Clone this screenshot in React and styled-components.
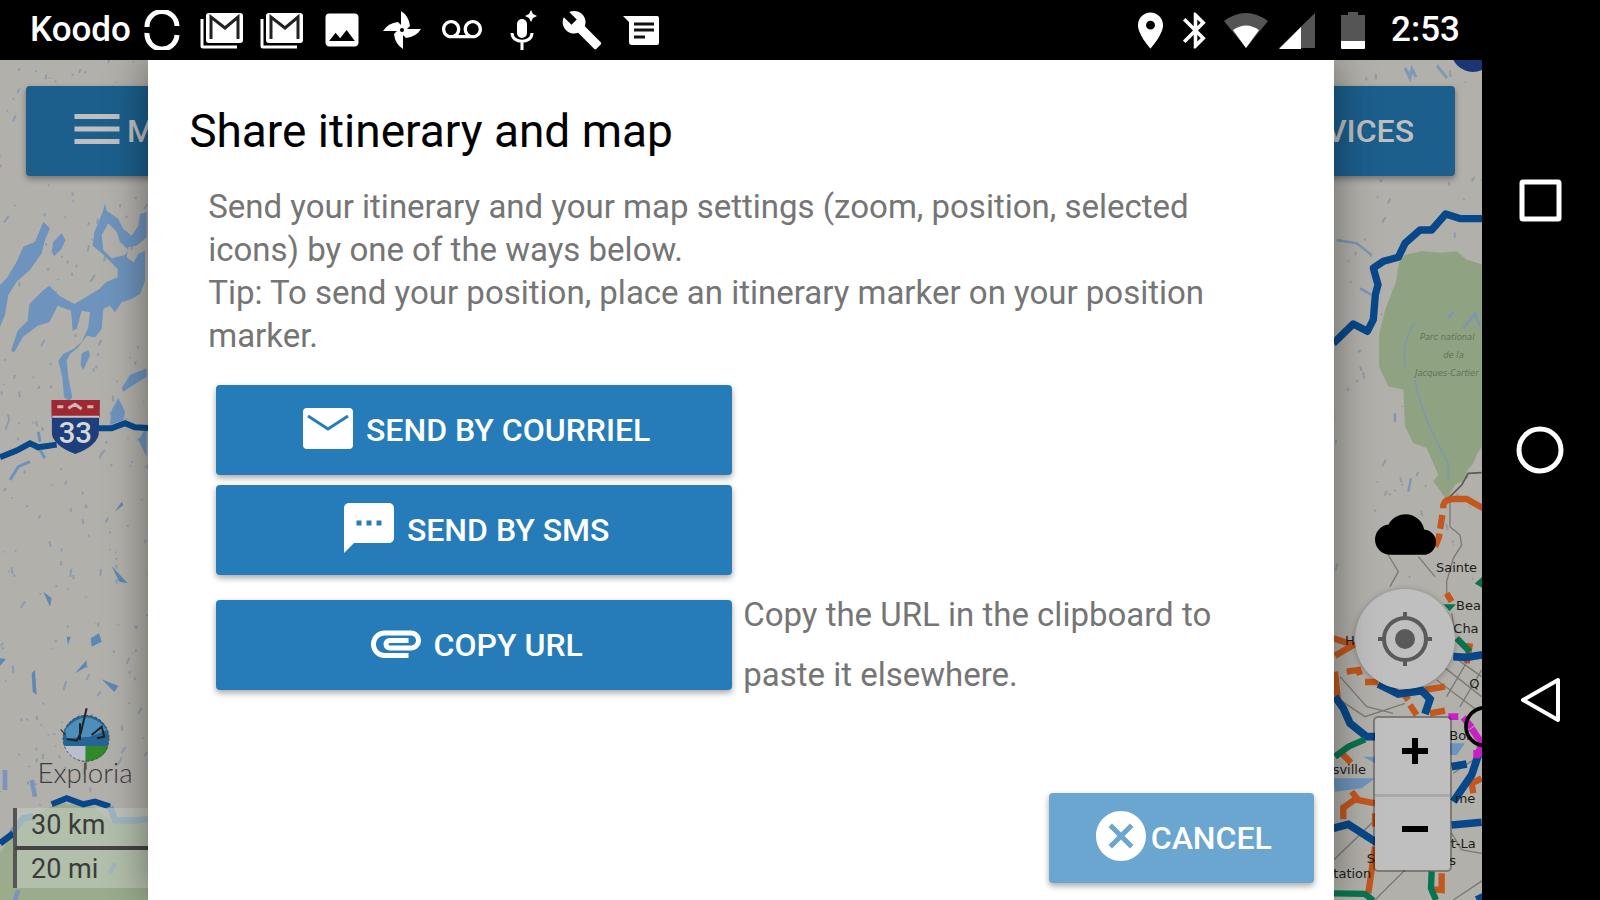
import styled, { createGlobalStyle } from 'styled-components';
import {
    MdAttachment,
    MdBluetooth,
    MdBuild,
    MdCancel,
    MdCloud,
    MdImage,
    MdLocationOn,
    MdMenu,
    MdTextsms,
    MdVoicemail,
} from 'react-icons/md';

const colors = {
    primary: '#267cb9',
    primaryDimmed: '#1c5f8d',
    primaryLight: '#6aa6cf',
    land: '#b2b0aa',
    water: '#6e94bd',
    forest: '#8fa382',
    motorway: '#08488a',
    road: '#c4571d',
    trunk: '#08744f',
    control: '#bfbfbf',
    bodyText: '#757575',
};

const GlobalStyle = createGlobalStyle`
    * {
        box-sizing: border-box;
    }

    body {
        margin: 0;
        background: #000;
        font-family: Roboto, 'Liberation Sans', sans-serif;
    }

    button {
        font-family: inherit;
        border: 0;
        cursor: pointer;
    }
`

const Device = styled.div`
    display: grid;
    grid-template-columns: 1fr 118px;
    height: 100vh;
    overflow: hidden;
    background: #000;
`

const Screen = styled.div`
    display: flex;
    flex-direction: column;
    min-width: 0;
    min-height: 0;
`

const StatusBar = styled.header`
    display: flex;
    align-items: center;
    justify-content: space-between;
    flex: none;
    height: 60px;
    padding: 0 22px 0 30px;
    color: #fff;
    font-size: 35px;
    font-weight: 500;
    line-height: 40px;
`

const StatusGroup = styled.div`
    display: flex;
    align-items: center;
    gap: ${({ gap }) => gap};

    svg {
        display: block;
        flex: none;
    }
`

const StatusCell = styled.span`
    display: flex;
    justify-content: center;
    width: ${({ width }) => width};
`

const Clock = styled.time`
    margin-left: 5px;
`

const MapArea = styled.main`
    position: relative;
    display: flex;
    flex-direction: column;
    justify-content: space-between;
    flex: 1;
    min-height: 0;
    padding: 26px 27px 30px 26px;
    overflow: hidden;
    background: ${colors.land};
`

const MapCanvas = styled.svg`
    position: absolute;
    inset: 0;
    width: 100%;
    height: 100%;
`

const Toolbar = styled.nav`
    position: relative;
    display: flex;
    justify-content: space-between;
`

const RaisedButton = styled.button`
    display: flex;
    align-items: center;
    justify-content: center;
    gap: ${({ gap }) => gap || '0'};
    height: 90px;
    padding: 0 41px;
    border-radius: 4px;
    color: ${({ dimmed }) => (dimmed ? '#bfbfbf' : '#fff')};
    background: ${({ background }) => background || colors.primary};
    box-shadow: 0 3px 6px rgba(0, 0, 0, .35);
    font-size: 32px;
    font-weight: 500;
    line-height: 40px;
    text-transform: uppercase;

    svg {
        flex: none;
        margin-bottom: 4px;
    }
`

const MapControls = styled.div`
    position: relative;
    display: flex;
    flex-direction: column;
    align-items: center;
    align-self: flex-end;
    width: 100px;
`

const LocateButton = styled.button`
    display: flex;
    align-items: center;
    justify-content: center;
    width: 100px;
    height: 100px;
    margin: 24px 0 29px;
    padding: 0;
    border-radius: 50%;
    background: ${colors.control};
    box-shadow: 0 1px 6px rgba(0, 0, 0, .3);
`

const ZoomControl = styled.div`
    display: flex;
    flex-direction: column;
    align-self: flex-end;
    margin-right: 5px;
    border-radius: 3px;
    background: ${colors.control};
    box-shadow: 0 0 0 2px rgba(0, 0, 0, .3);
`

const ZoomButton = styled.button`
    display: flex;
    align-items: center;
    justify-content: center;
    width: 75px;
    height: 76px;
    padding: 0 0 10px 4px;
    background: transparent;

    & + & {
        border-top: 3px solid #a8a8a8;
    }
`

const Dialog = styled.section`
    position: absolute;
    top: 0;
    bottom: 0;
    left: 10%;
    display: flex;
    flex-direction: column;
    width: 80%;
    padding: 48px 20px 17px 41px;
    background: #fff;
    box-shadow: 0 0 40px rgba(0, 0, 0, .45);
`

const DialogTitle = styled.h2`
    margin: 0;
    color: #000;
    font-size: 46px;
    font-weight: 400;
    line-height: 46px;
`

const DialogText = styled.p`
    margin: 31px 60px 0 19px;
    color: ${colors.bodyText};
    font-size: 33px;
    line-height: 43px;
`

const ShareList = styled.div`
    display: grid;
    grid-template-columns: 516px 1fr;
    column-gap: 11px;
    row-gap: 10px;
    margin: 28px 60px 0 27px;
`

const ShareButton = styled(RaisedButton)`
    grid-column: 1;
    margin-top: ${({ spaced }) => (spaced ? '15px' : '0')};
`

const ShareHint = styled.p`
    align-self: start;
    margin: 0;
    color: ${colors.bodyText};
    font-size: 33px;
    line-height: 60px;
`

const DialogActions = styled.footer`
    display: flex;
    justify-content: flex-end;
    margin-top: auto;
`

const CancelButton = styled(RaisedButton)`
    min-width: 265px;
    background: ${colors.primaryLight};
`

const SystemBar = styled.aside`
    display: flex;
    flex-direction: column;
    align-items: center;
    justify-content: center;
    gap: 200px;
    background: #000;
`

const SystemButton = styled.button`
    width: 50px;
    height: 50px;
    padding: 0;
    background: transparent;

    svg {
        display: block;
    }
`

const SyncIcon = () => (
    <svg width="40" height="40" viewBox="0 0 40 40" fill="none" stroke="#fff" strokeWidth="5">
        <path d="M5 17A15 15 0 0 1 35 16" />
        <path d="M5 23A15 15 0 0 0 35 25" />
    </svg>
)

const GmailIcon = () => (
    <svg width="44" height="40" viewBox="0 0 44 40" fill="none">
        <path d="M2 9v27q0 1 1 1h34" stroke="#fff" strokeWidth="3" />
        <rect x="6" y="3" width="37" height="30" rx="3" fill="#fff" />
        <path d="M11 29V7l14 11L38 7v22" stroke="#222" strokeWidth="3" />
    </svg>
)

const PinwheelIcon = () => (
    <svg width="40" height="40" viewBox="0 0 40 40" fill="#fff">
        {[0, 90, 180, 270].map( a => (
            <path key={a} transform={`rotate(${a} 20 20)`} d="M19 18V1q8 5 9 15l-5 5z" />
        ))}
        <circle cx="20" cy="20" r="2" fill="#000" />
    </svg>
)

const AssistantMicIcon = () => (
    <svg width="40" height="40" viewBox="0 0 40 40" fill="none">
        <rect x="15" y="9" width="10" height="19" rx="5" fill="#fff" />
        <path d="M10 23c0 11 20 11 20 0M20 31v9" stroke="#fff" strokeWidth="3" />
        <path d="M29 0l2 4 4 2-4 2-2 4-2-4-4-2 4-2z" fill="#fff" />
    </svg>
)

const MessageIcon = () => (
    <svg width="40" height="40" viewBox="0 0 40 40" fill="none">
        <path d="M1 6h34q2 0 2 2v25q0 2-2 2H10q-3 0-3-3V12z" fill="#fff" />
        <path d="M12 14h20M12 20h20M12 27h11" stroke="#111" strokeWidth="3" />
    </svg>
)

const WifiIcon = () => (
    <svg width="44" height="40" viewBox="0 0 44 40">
        <path d="M0 11Q22-5 44 11L22 38z" fill="#555" />
        <path d="M9 20q13-9 26 0L22 38z" fill="#fff" />
    </svg>
)

const SignalIcon = () => (
    <svg width="36" height="40" viewBox="0 0 36 40">
        <path d="M36 3v35H0z" fill="#555" />
        <path d="M22 17v22H0z" fill="#fff" />
    </svg>
)

const BatteryIcon = () => (
    <svg width="26" height="40" viewBox="0 0 26 40">
        <path d="M8 2h10v3h7v26H1V5h7z" fill="#555" />
        <path d="M1 31h24v7q0 1-1 1H2q-1 0-1-1z" fill="#fff" />
    </svg>
)

const MailIcon = () => (
    <svg width="60" height="60" viewBox="0 0 60 60">
        <rect x="5" y="10" width="50" height="41" rx="4" fill="#fff" />
        <path d="M10 18l20 13 20-13" fill="none" stroke={colors.primary} strokeWidth="3" />
    </svg>
)

const TargetIcon = () => (
    <svg width="56" height="56" viewBox="0 0 56 56" fill="none" stroke="#5a5a5a">
        <circle cx="28" cy="28" r="21" strokeWidth="4" />
        <circle cx="28" cy="28" r="10" fill="#5a5a5a" stroke="none" />
        <path d="M28 1v8M28 47v8M1 28h8M47 28h8" strokeWidth="4" />
    </svg>
)

// Small lakes spread over the land, always in the same places
const buildLakes = (count, x0, y0, width, height, seed) => {
    let state = seed
    const next = () => {
        state = (state * 16807) % 2147483647
        return state / 2147483647
    }
    return Array.from({ length: count }, () => {
        const x = x0 + next() * width
        const y = y0 + next() * height
        const size = next() * next() * 9 + 1
        return `M${x.toFixed(1)} ${y.toFixed(1)}l${(size * (next() - .3)).toFixed(1)} ${(-size).toFixed(1)}`
    }).join('')
}

const leftLakes = buildLakes(230, 0, 60, 148, 750, 77)
const rightLakes = buildLakes(90, 1332, 60, 150, 520, 431)

const WestMap = () => (
    <g>
        <path d={leftLakes} stroke="#7590b0" strokeWidth="2" opacity=".6" />
        <g transform="translate(0 180) scale(.3333)">
            <path
                fill={colors.water}
                d="M130 125l20 20-15 35-10 40-35 50-40 35-25 40-10 60-15 35v-125l20-20 30-50 20-45 35-15zM155 215l5-30 25-25 12 20-15 30-20 18zM315 70l5 22 35 25 15 30 25 20 20-30 5-35 20-5v75l-30 25-25 5-5 30 20 15 15-25 20-10v90l-15 40-25 15-30 10-20 30-15-20-20 10-5 60-20 25-25-5-25 35-25 20-10 20 5 50 12 60-10 12-15-12-5-60-12-50 15-20 30-15 25-20 20-45 5-45-25-5-15 55-12 5-5-60-40-15-25 50-35 10-45 35-25 45-10-5 20-60 30-30 5-50 40-40 20-15 30 30 45 25 50-30 25-15 20-20 35-15v-25l-45-45-30-25 5-40 25-60zM325 130l-20 35 5 45 25 25 40-10 10-15-25-25-10-30z"
                fillRule="evenodd"
            />
            <path fill={colors.water} d="M335 690l20-35 20 40-5 25-40 15zM365 625l25-40 50-20v25l-40 25-30 20zM415 780l25-40v90zM245 520l20-10 5 15-20 45-8-15z" />
            <path d="M0 832l50-20 40-22 25 12 55-8M290 745h45l40-15 30 12 40 2" fill="none" stroke={colors.motorway} strokeWidth="18" />
            <path d="M30 900l25-40 35-15M115 755l5 30M120 810l15 25" fill="none" stroke={colors.water} strokeWidth="9" />
            <path d="M155 660h144l-3 105q-10 35-70 57-60-22-70-57z" fill="#1f3f7c" />
            <path d="M155 660h144v50H155z" fill="#a02830" />
            <path d="M172 680h18M205 685l20-12 20 14M262 680h18" stroke="#d0b8b8" strokeWidth="9" fill="none" />
            <path d="M157 710h140" stroke="#c9c2c6" strokeWidth="6" />
            <text x="226" y="790" textAnchor="middle" fontFamily="Roboto" fontWeight="500" fontSize="88" fill="#d8d8d8">33</text>
        </g>
        <g transform="translate(0 460) scale(.3333)">
            <path fill="#9aac8c" d="M0 1180l60-90 110-60 110 10 60 50h105v260H0z" />
            <path d="M155 1033l45-18 50 18 35-8 45 15" fill="none" stroke={colors.motorway} strokeWidth="18" />
            <path d="M330 1040l15 40 60 2 40-5M35 1120l35-45 30-5" fill="none" stroke={colors.water} strokeWidth="20" />
            <path d="M0 1150l40-30" stroke={colors.motorway} strokeWidth="20" />
            <path d="M15 930v60M95 960l10 50M55 1290l-20 60M345 1210l-15 30" stroke="#7c93bd" strokeWidth="14" />
            <path fill="#5b88b4" d="M335 318l48 52-25-5zM272 535l25-15 8 25-30 15zM305 658l50 20-12 18zM95 640l10-10 5 75-12-10zM225 640l35-40v20zM130 395l25 20-5 25zM0 595l18 2-18 20zM200 530l12 0-8 25zM345 155l20-30 5 10z" />
        </g>
        <g transform="translate(30 700) scale(.3333)">
            <circle cx="168" cy="115" r="69" fill="#256595" />
            <path d="M105 90q65-75 126 0l-50 20-70 5z" fill="#5fa0cc" opacity=".7" />
            <path d="M100 138h67v46q-55-5-67-46z" fill="#b9bfcb" />
            <path d="M167 138h68q-12 42-68 46z" fill="#2f8a27" />
            <path d="M170 25l-18 75-12 22-30-5M150 70v50M185 105l30-25 8 30-22 5" fill="none" stroke="#222" strokeWidth="6" />
            <path d="M92 88l14 16" stroke="#333" strokeWidth="4" />
            <circle cx="168" cy="115" r="69" fill="none" stroke="#3f4a50" strokeWidth="3" strokeDasharray="8 6" />
            <path d="M168 184v25" stroke="#555" strokeWidth="4" />
            <text x="165" y="250" textAnchor="middle" fontFamily="Lato" fontWeight="300" fontSize="83" fill="#3c3c3c">Exploria</text>
        </g>
        <rect x="15" y="808" width="140" height="80" fill="#c7cfc2" opacity=".55" />
        <path d="M15 808v80" stroke="#555" strokeWidth="4" />
        <path d="M15 848h140" stroke="#444" strokeWidth="4" />
        <g fontFamily="Roboto" fontSize="27" fill="#3b3b3b">
            <text x="31" y="834">30 km</text>
            <text x="31" y="878">20 mi</text>
        </g>
    </g>
)

const EastMap = () => (
    <g>
        <path d={rightLakes} stroke="#7d8ca0" strokeWidth="2" opacity=".6" />
        <circle cx="1473" cy="50" r="22" fill="#1c3574" />
        <path d="M1405 68l5 10 2-9 4 8M1437 66l10 12" fill="none" stroke="#7c9ab8" strokeWidth="3" />
        <g transform="translate(1320 180) scale(.3333)">
            <path fill={colors.forest} d="M255 225l50-12 60 5 45-4 30 25 50 15v540l-20 30-10 25-20 25 5 20-40 20-25 45-40-55 15-20-35-80-40-15-25-50-5-110-45-10-28-60v-95l20-80 30-75 10-60z" />
            <path d="M40 490l60-58 42 22 18-35 6-75 8-30-14-50 30-20 45-12 20-42 45-40h35l42-48 45 14h65" fill="none" stroke={colors.motorway} strokeWidth="22" strokeLinejoin="round" />
            <path d="M255 560q-10-80 30-130M285 600q20 110 100 250v50" fill="none" stroke="#8198a8" strokeWidth="5" />
            <path d="M120 325l35 20M50 180l60 10 45 35M265 935l8-40M225 700v25M385 415l15-20M430 445l35-45 15 40" fill="none" stroke="#7b95b5" strokeWidth="7" />
            <path d="M390 950l35-35 20-35 40-2" fill="none" stroke="#5b5b58" strokeWidth="5" />
            <g fontFamily="DejaVu Sans" fontStyle="italic" fontSize="25" fill="#5f7355">
                <text x="300" y="480">Parc national</text>
                <text x="370" y="535">de la</text>
                <text x="285" y="588">Jacques-Cartier</text>
            </g>
        </g>
        <g transform="translate(1320 480) scale(.3333)">
            <path d="M390 60v80l30 25 5 30-25 40-20 70v45M205 225l30 50-25 45M295 230l50 60M45 650l90 60 120-40M60 590l80 90 80 20M0 1180l165-160M165 1260l90-90M400 1260l90-60M370 560l115 90M350 600l120 90M400 530l85 60M380 650l70-120M420 680l65-110M395 400l10 60M400 880l90-60M395 1060l30 50 60 10" fill="none" stroke="#7b7973" strokeWidth="4" />
            <path fill={colors.water} d="M40 895h125l-40 30-80 10zM390 790h45l-25 35h-20zM130 830h35v20z" />
            <g fill="none" strokeWidth="19" stroke={colors.road}>
                <path d="M370 85v-10q5-18 30-18h40l50 28" />
                <path d="M367 105l-10 65-15 40" strokeDasharray="42 14" />
                <path d="M380 340l15 25M40 475l60 20-55 32M45 575l8 80M80 575l35-5 5 15M135 606h40M315 630l60-10M270 675l20 30M330 700l45-8M65 820l28 28M165 970l-60-12-35 25v35M95 935l20 25M145 1240l20-140M165 1000v40M485 895l-30 15 5 30M365 1180v50l-25-2M440 550l10-60M250 640l15 20" />
            </g>
            <g fill="none" strokeWidth="23" stroke={colors.motorway}>
                <path d="M45 650l25 35 20 45 50 40h30M175 612l60 30 70-10 25 25-15 45M400 530l40 2 50-8M40 1045l45-12 85 55M400 965l55-80 25-75M395 860l45-8M395 1035l90-8M470 1260l20-10" />
            </g>
            <g fill="none" strokeWidth="19" stroke={colors.trunk}>
                <path d="M45 830l40-30 50-22M410 475l40 40M40 1240l95 2 25 20M335 1175l-2 50 15 35" />
            </g>
            <path d="M375 375h28l-14 15zM468 310l20-18v30z" fill={colors.trunk} stroke={colors.trunk} strokeWidth="4" />
            <path d="M385 710h30M430 712l25 30M455 745l20 30M480 770v60M470 835v-25" stroke="#cb1fc6" strokeWidth="20" />
            <circle cx="495" cy="740" r="57" fill="none" stroke="#000" strokeWidth="11" />
            <g fontFamily="DejaVu Sans" fontSize="39" fill="#1c1c1c">
                <text x="348" y="275">Sainte</text>
                <text x="408" y="390">Bea</text>
                <text x="400" y="460">Cha</text>
                <text x="448" y="625">Q</text>
                <text x="388" y="780">Boi</text>
                <text x="38" y="882">sville</text>
                <text x="404" y="970">me</text>
                <text x="392" y="1103">t-La</text>
                <text x="388" y="1155">s</text>
                <text x="40" y="1195">tation</text>
                <text x="75" y="495">H</text>
                <text x="140" y="1150">S</text>
            </g>
        </g>
    </g>
)

const App = () => (
    <>
        <GlobalStyle />
        <Device>
            <Screen>
                <StatusBar>
                    <StatusGroup gap="11px">
                        <span>Koodo</span>
                        <StatusGroup gap="20px">
                            <StatusCell width="40px"><SyncIcon /></StatusCell>
                            <StatusCell width="40px"><GmailIcon /></StatusCell>
                            <StatusCell width="40px"><GmailIcon /></StatusCell>
                            <StatusCell width="40px"><MdImage size={44} /></StatusCell>
                            <StatusCell width="40px"><PinwheelIcon /></StatusCell>
                            <StatusCell width="40px"><MdVoicemail size={40} /></StatusCell>
                            <StatusCell width="40px"><AssistantMicIcon /></StatusCell>
                            <StatusCell width="40px"><MdBuild size={42} /></StatusCell>
                            <StatusCell width="40px"><MessageIcon /></StatusCell>
                        </StatusGroup>
                    </StatusGroup>
                    <StatusGroup gap="0">
                        <StatusCell width="44px"><MdLocationOn size={43} /></StatusCell>
                        <StatusCell width="46px"><MdBluetooth size={43} /></StatusCell>
                        <StatusCell width="56px"><WifiIcon /></StatusCell>
                        <StatusCell width="46px"><SignalIcon /></StatusCell>
                        <StatusCell width="66px"><BatteryIcon /></StatusCell>
                        <Clock>2:53</Clock>
                    </StatusGroup>
                </StatusBar>
                <MapArea>
                    <MapCanvas viewBox="0 60 1482 840" preserveAspectRatio="xMidYMid slice">
                        <WestMap />
                        <EastMap />
                    </MapCanvas>
                    <Toolbar>
                        <RaisedButton dimmed background={colors.primaryDimmed}>
                            <MdMenu size={60} />
                            Menu
                        </RaisedButton>
                        <RaisedButton dimmed background={colors.primaryDimmed}>
                            Services
                        </RaisedButton>
                    </Toolbar>
                    <MapControls>
                        <MdCloud size={61} color="#000" />
                        <LocateButton aria-label="My position">
                            <TargetIcon />
                        </LocateButton>
                        <ZoomControl>
                            <ZoomButton aria-label="Zoom in">
                                <svg width="28" height="28" viewBox="0 0 28 28" stroke="#000" strokeWidth="6">
                                    <path d="M14 1v26M1 14h26" />
                                </svg>
                            </ZoomButton>
                            <ZoomButton aria-label="Zoom out">
                                <svg width="28" height="28" viewBox="0 0 28 28" stroke="#000" strokeWidth="6">
                                    <path d="M1 14h26" />
                                </svg>
                            </ZoomButton>
                        </ZoomControl>
                    </MapControls>
                    <Dialog role="dialog" aria-labelledby="share-title">
                        <DialogTitle id="share-title">Share itinerary and map</DialogTitle>
                        <DialogText>
                            Send your itinerary and your map settings (zoom, position, selected
                            icons) by one of the ways below.
                            <br />
                            Tip: To send your position, place an itinerary marker on your position
                            marker.
                        </DialogText>
                        <ShareList>
                            <ShareButton gap="8px"><MailIcon />Send by courriel</ShareButton>
                            <ShareButton gap="8px"><MdTextsms size={60} />Send by SMS</ShareButton>
                            <ShareButton gap="8px" spaced><MdAttachment size={60} />Copy URL</ShareButton>
                            <ShareHint>Copy the URL in the clipboard to paste it elsewhere.</ShareHint>
                        </ShareList>
                        <DialogActions>
                            <CancelButton>
                                <MdCancel size={60} />
                                Cancel
                            </CancelButton>
                        </DialogActions>
                    </Dialog>
                </MapArea>
            </Screen>
            <SystemBar>
                <SystemButton aria-label="Recent apps">
                    <svg width="50" height="50" viewBox="0 0 50 50" fill="none" stroke="#fff" strokeWidth="5">
                        <rect x="6" y="7" width="37" height="37" rx="1" />
                    </svg>
                </SystemButton>
                <SystemButton aria-label="Home">
                    <svg width="50" height="50" viewBox="0 0 50 50" fill="none" stroke="#fff" strokeWidth="5">
                        <circle cx="24" cy="25" r="21" />
                    </svg>
                </SystemButton>
                <SystemButton aria-label="Back">
                    <svg width="50" height="50" viewBox="0 0 50 50" fill="none" stroke="#fff" strokeWidth="4" strokeLinejoin="round">
                        <path d="M42 5v40L7 25z" />
                    </svg>
                </SystemButton>
            </SystemBar>
        </Device>
    </>
)

export default App;
